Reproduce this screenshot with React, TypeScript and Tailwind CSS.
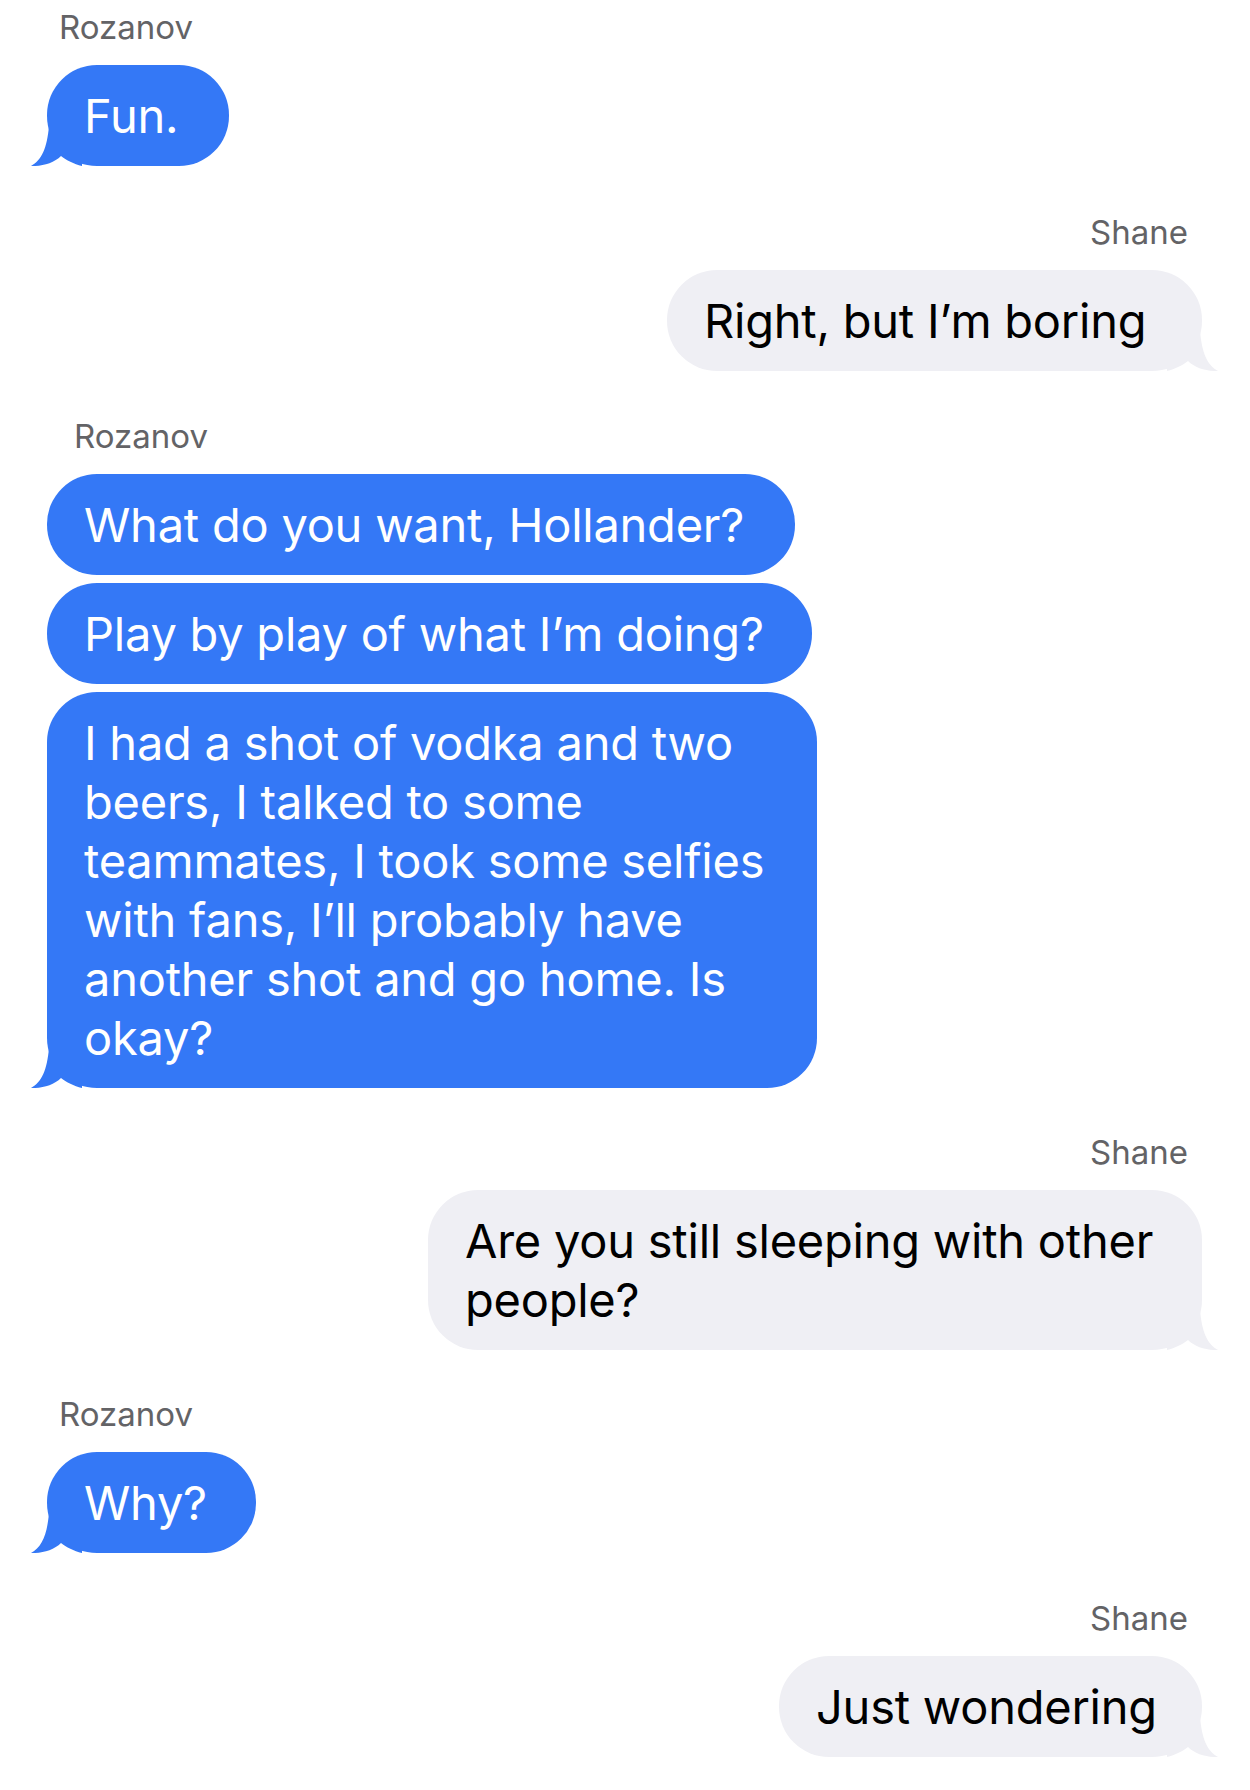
import React from "react";

const BLUE = "#3478F6";
const GRAY = "#EFEFF4";

function Tail({ side, color }: { side: "left" | "right"; color: string }) {
  return (
    <svg
      width="60"
      height="48"
      viewBox="0 0 60 48"
      className={
        side === "left"
          ? "absolute bottom-0 left-[-17px]"
          : "absolute bottom-0 right-[-17px] -scale-x-100"
      }
    >
      <path
        d="M19 8 C17 30 12 42 1 48 C12 48.5 24 45 31 38 C36 42 44 46 52 48 L52 8 Z"
        fill={color}
      />
    </svg>
  );
}

function Bubble({
  side,
  tail,
  lines,
  w,
}: {
  side: "left" | "right";
  tail?: boolean;
  lines: string[];
  w: string;
}) {
  const color = side === "left" ? BLUE : GRAY;
  return (
    <div
      className={`relative rounded-[50px] py-[21px] pl-[37px] pr-[20px] text-[47px] leading-[59px] tracking-[-0.005em] ${w} ${
        side === "left" ? "bg-[#3478F6] text-white" : "bg-[#EFEFF4] text-black"
      }`}
    >
      {tail && <Tail side={side} color={color} />}
      <div className="relative">
        {lines.map((l, i) => (
          <div key={i} className="whitespace-nowrap">
            {l}
          </div>
        ))}
      </div>
    </div>
  );
}

function Label({ children, className }: { children: React.ReactNode; className: string }) {
  return <div className={`text-[33px] leading-[40px] text-[#636366] ${className}`}>{children}</div>;
}

export default function App() {
  return (
    <div
      className="w-[1250px] min-h-[1790px] bg-white pl-[47px] pr-[48px] pt-[7px]"
      style={{ fontFamily: "Inter, 'Noto Sans', sans-serif" }}
    >
      <div className="flex flex-col items-start">
        <Label className="ml-[12px]">Rozanov</Label>
        <div className="mt-[18px]">
          <Bubble side="left" tail lines={["Fun."]} w="w-[182px]" />
        </div>
      </div>

      <div className="mt-[46px] flex flex-col items-end">
        <Label className="mr-[14px]">Shane</Label>
        <div className="mt-[18px]">
          <Bubble side="right" tail lines={["Right, but I’m boring"]} w="w-[535px]" />
        </div>
      </div>

      <div className="mt-[45px] flex flex-col items-start">
        <Label className="ml-[27px]">Rozanov</Label>
        <div className="mt-[18px] flex flex-col items-start gap-[8px]">
          <Bubble side="left" lines={["What do you want, Hollander?"]} w="w-[748px]" />
          <Bubble side="left" lines={["Play by play of what I’m doing?"]} w="w-[765px]" />
          <Bubble
            side="left"
            tail
            lines={[
              "I had a shot of vodka and two",
              "beers, I talked to some",
              "teammates, I took some selfies",
              "with fans, I’ll probably have",
              "another shot and go home. Is",
              "okay?",
            ]}
            w="w-[770px]"
          />
        </div>
      </div>

      <div className="mt-[44px] flex flex-col items-end">
        <Label className="mr-[14px]">Shane</Label>
        <div className="mt-[18px]">
          <Bubble
            side="right"
            tail
            lines={["Are you still sleeping with other", "people?"]}
            w="w-[774px]"
          />
        </div>
      </div>

      <div className="mt-[44px] flex flex-col items-start">
        <Label className="ml-[12px]">Rozanov</Label>
        <div className="mt-[18px]">
          <Bubble side="left" tail lines={["Why?"]} w="w-[209px]" />
        </div>
      </div>

      <div className="mt-[45px] flex flex-col items-end">
        <Label className="mr-[14px]">Shane</Label>
        <div className="mt-[18px]">
          <Bubble side="right" tail lines={["Just wondering"]} w="w-[423px]" />
        </div>
      </div>
    </div>
  );
}
